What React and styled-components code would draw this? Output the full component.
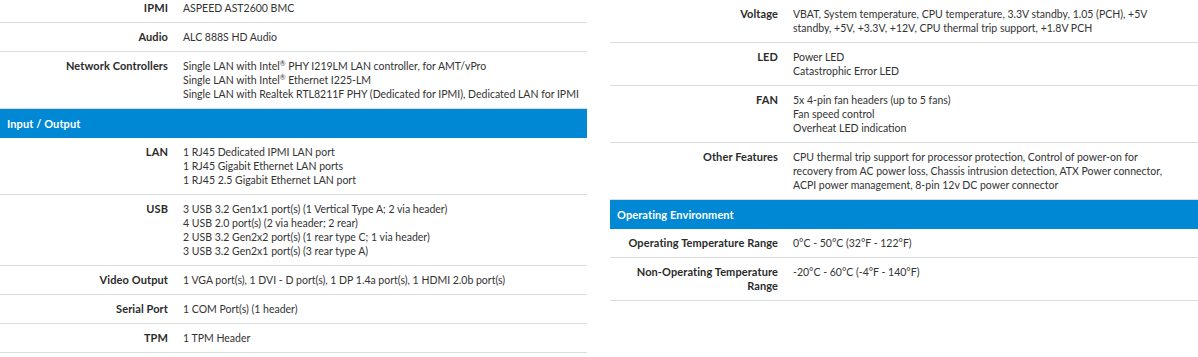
import styled, { createGlobalStyle } from "styled-components"

const GlobalStyle = createGlobalStyle`
  html, body {
    margin: 0;
    padding: 0;
    background: #fff;
  }
  body {
    font-family: Lato, "Liberation Sans", Arial, sans-serif;
    font-size: 10.5px;
    color: #333;
    overflow: hidden;
  }
`

const Page = styled.div`
  display: grid;
  grid-template-columns: 587px 588px;
  column-gap: 23px;
  align-items: start;
`

const Column = styled.section`
  display: flex;
  flex-direction: column;
  margin-top: ${(props) => props.$offset || 0}px;
`

const SectionHeader = styled.div`
  background: #0088d4;
  color: #fff;
  font-weight: 700;
  font-size: 11px;
  letter-spacing: 0.1px;
  height: 29px;
  line-height: 29px;
  padding-left: 7px;
`

const Row = styled.div`
  display: grid;
  grid-template-columns: 168px 1fr;
  column-gap: 15px;
  padding: 7px 0;
  border-bottom: 1px solid #dcdcdc;
  line-height: 14px;
`

const Label = styled.div`
  text-align: right;
  font-weight: 700;
  font-size: 11px;
  letter-spacing: 0.1px;
  color: #2b2b2b;
`

const Value = styled.div`
  padding-right: ${(props) => props.$wrapPad}px;
`

const Line = styled.div``

const Reg = styled.sup`
  font-size: 7px;
  line-height: 0;
  vertical-align: 4px;
`

const intel = (
  <>
    Intel<Reg>®</Reg>
  </>
)

const leftSpecs = [
  { label: "IPMI", lines: ["ASPEED AST2600 BMC"] },
  { label: "Audio", lines: ["ALC 888S HD Audio"] },
  {
    label: "Network Controllers",
    lines: [
      <>Single LAN with {intel} PHY I219LM LAN controller, for AMT/vPro</>,
      <>Single LAN with {intel} Ethernet I225-LM</>,
      "Single LAN with Realtek RTL8211F PHY (Dedicated for IPMI), Dedicated LAN for IPMI",
    ],
  },
  { header: "Input / Output" },
  {
    label: "LAN",
    lines: [
      "1 RJ45 Dedicated IPMI LAN port",
      "1 RJ45 Gigabit Ethernet LAN ports",
      "1 RJ45 2.5 Gigabit Ethernet LAN port",
    ],
  },
  {
    label: "USB",
    lines: [
      "3 USB 3.2 Gen1x1 port(s) (1 Vertical Type A; 2 via header)",
      "4 USB 2.0 port(s) (2 via header; 2 rear)",
      "2 USB 3.2 Gen2x2 port(s) (1 rear type C; 1 via header)",
      "3 USB 3.2 Gen2x1 port(s) (3 rear type A)",
    ],
  },
  {
    label: "Video Output",
    lines: ["1 VGA port(s), 1 DVI - D port(s), 1 DP 1.4a port(s), 1 HDMI 2.0b port(s)"],
  },
  { label: "Serial Port", lines: ["1 COM Port(s) (1 header)"] },
  { label: "TPM", lines: ["1 TPM Header"] },
]

const rightSpecs = [
  {
    label: "Voltage",
    lines: [
      "VBAT, System temperature, CPU temperature, 3.3V standby, 1.05 (PCH), +5V standby, +5V, +3.3V, +12V, CPU thermal trip support, +1.8V PCH",
    ],
  },
  { label: "LED", lines: ["Power LED", "Catastrophic Error LED"] },
  {
    label: "FAN",
    lines: ["5x 4-pin fan headers (up to 5 fans)", "Fan speed control", "Overheat LED indication"],
  },
  {
    label: "Other Features",
    lines: [
      "CPU thermal trip support for processor protection, Control of power-on for recovery from AC power loss, Chassis intrusion detection, ATX Power connector, ACPI power management, 8-pin 12v DC power connector",
    ],
  },
  { header: "Operating Environment" },
  { label: "Operating Temperature Range", lines: ["0°C - 50°C (32°F - 122°F)"] },
  { label: "Non-Operating Temperature Range", lines: ["-20°C - 60°C (-4°F - 140°F)"] },
]

function SpecList({ specs, wrapPad = 0 }) {
  return specs.map((spec, i) =>
    spec.header ? (
      <SectionHeader key={i}>{spec.header}</SectionHeader>
    ) : (
      <Row key={i}>
        <Label>{spec.label}</Label>
        <Value $wrapPad={wrapPad}>
          {spec.lines.map((line, j) => (
            <Line key={j}>{line}</Line>
          ))}
        </Value>
      </Row>
    )
  )
}

export default function App() {
  return (
    <>
      <GlobalStyle />
      <Page>
        <Column $offset={-6}>
          <SpecList specs={leftSpecs} />
        </Column>
        <Column>
          <SpecList specs={rightSpecs} wrapPad={26} />
        </Column>
      </Page>
    </>
  )
}
